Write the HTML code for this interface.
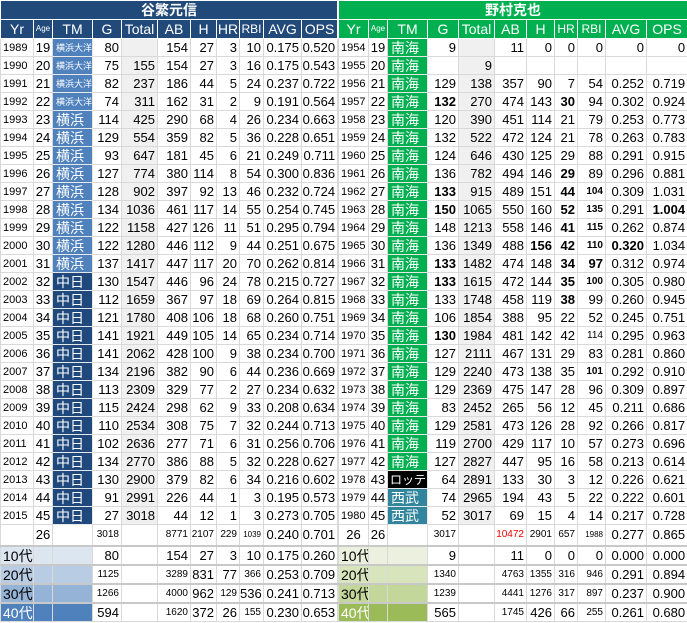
<!DOCTYPE html>
<html><head><meta charset="utf-8">
<style>
body{margin:0;width:687px;height:623px;background:#fff;overflow:hidden;font-family:"Liberation Sans","Noto Sans CJK JP",sans-serif;}
table{position:absolute;top:0;border-collapse:collapse;table-layout:fixed;font-size:13px;color:#000;}
#L{left:0;width:337px}
#R{left:338px;width:349px}
td{border:1px solid #d9d9d9;padding:0 2px 0 0;text-align:right;white-space:nowrap;overflow:hidden;height:17px;line-height:16px;}
tr.h td{color:#fff;text-align:center;padding:0;font-size:14px;border-color:#fff;height:18px}
#L tr.h td{background:#21497a}
#R tr.h td{background:#00b050}
tr.n td{font-size:14px;font-weight:bold;border-color:#fff}
td.y{font-size:11px;text-align:left;padding-left:2px}
td.a{text-align:center;padding:0}
td.t{background:#f0f0f0}
td.tm{text-align:left;padding-left:3px;color:#fff;font-size:14px;border-color:#e8e8e8}
.yo{background:#4f81bd;font-size:9px !important}
.yk{background:#4f81bd}
.cd{background:#1f497d}
.nk{background:#00b050}
.lo{background:#000;font-size:12px !important;padding-left:2px !important}
.sb{background:#31859c}
.b{font-weight:bold}
.s{font-size:10px}
.r{color:#e00;font-size:10px}
tr.tot td{height:20px}
tr.sm td{border-top:2px solid #c8c8c8;height:17px}
tr.sm td.y{font-size:14px}
.l1{background:#dce6f1}.l2{background:#b8cce4}.l3{background:#95b3d7}.l4{background:#4f81bd;color:#fff}
.r1{background:#ebf1de}.r2{background:#d8e4bc}.r3{background:#c4d79b}.r4{background:#9bbb59;color:#fff}
</style></head><body>
<table id="L">
<colgroup><col style="width:33px"><col style="width:19px"><col style="width:40px"><col style="width:29px"><col style="width:36px"><col style="width:33px"><col style="width:26px"><col style="width:23px"><col style="width:24px"><col style="width:38px"><col style="width:36px"></colgroup>
<tr class="h n"><td colspan="11">谷繁元信</td></tr>
<tr class="h"><td>Yr</td><td style="font-size:8px">Age</td><td>TM</td><td>G</td><td>Total</td><td>AB</td><td>H</td><td>HR</td><td style="font-size:12px">RBI</td><td>AVG</td><td>OPS</td></tr>
<tr><td class="y">1989</td><td class="a">19</td><td class="tm yo">横浜大洋</td><td>80</td><td class="t"></td><td>154</td><td>27</td><td>3</td><td>10</td><td>0.175</td><td>0.520</td></tr>
<tr><td class="y">1990</td><td class="a">20</td><td class="tm yo">横浜大洋</td><td>75</td><td class="t">155</td><td>154</td><td>27</td><td>3</td><td>16</td><td>0.175</td><td>0.543</td></tr>
<tr><td class="y">1991</td><td class="a">21</td><td class="tm yo">横浜大洋</td><td>82</td><td class="t">237</td><td>186</td><td>44</td><td>5</td><td>24</td><td>0.237</td><td>0.722</td></tr>
<tr><td class="y">1992</td><td class="a">22</td><td class="tm yo">横浜大洋</td><td>74</td><td class="t">311</td><td>162</td><td>31</td><td>2</td><td>9</td><td>0.191</td><td>0.564</td></tr>
<tr><td class="y">1993</td><td class="a">23</td><td class="tm yk">横浜</td><td>114</td><td class="t">425</td><td>290</td><td>68</td><td>4</td><td>26</td><td>0.234</td><td>0.663</td></tr>
<tr><td class="y">1994</td><td class="a">24</td><td class="tm yk">横浜</td><td>129</td><td class="t">554</td><td>359</td><td>82</td><td>5</td><td>36</td><td>0.228</td><td>0.651</td></tr>
<tr><td class="y">1995</td><td class="a">25</td><td class="tm yk">横浜</td><td>93</td><td class="t">647</td><td>181</td><td>45</td><td>6</td><td>21</td><td>0.249</td><td>0.711</td></tr>
<tr><td class="y">1996</td><td class="a">26</td><td class="tm yk">横浜</td><td>127</td><td class="t">774</td><td>380</td><td>114</td><td>8</td><td>54</td><td>0.300</td><td>0.836</td></tr>
<tr><td class="y">1997</td><td class="a">27</td><td class="tm yk">横浜</td><td>128</td><td class="t">902</td><td>397</td><td>92</td><td>13</td><td>46</td><td>0.232</td><td>0.724</td></tr>
<tr><td class="y">1998</td><td class="a">28</td><td class="tm yk">横浜</td><td>134</td><td class="t">1036</td><td>461</td><td>117</td><td>14</td><td>55</td><td>0.254</td><td>0.745</td></tr>
<tr><td class="y">1999</td><td class="a">29</td><td class="tm yk">横浜</td><td>122</td><td class="t">1158</td><td>427</td><td>126</td><td>11</td><td>51</td><td>0.295</td><td>0.794</td></tr>
<tr><td class="y">2000</td><td class="a">30</td><td class="tm yk">横浜</td><td>122</td><td class="t">1280</td><td>446</td><td>112</td><td>9</td><td>44</td><td>0.251</td><td>0.675</td></tr>
<tr><td class="y">2001</td><td class="a">31</td><td class="tm yk">横浜</td><td>137</td><td class="t">1417</td><td>447</td><td>117</td><td>20</td><td>70</td><td>0.262</td><td>0.814</td></tr>
<tr><td class="y">2002</td><td class="a">32</td><td class="tm cd">中日</td><td>130</td><td class="t">1547</td><td>446</td><td>96</td><td>24</td><td>78</td><td>0.215</td><td>0.727</td></tr>
<tr><td class="y">2003</td><td class="a">33</td><td class="tm cd">中日</td><td>112</td><td class="t">1659</td><td>367</td><td>97</td><td>18</td><td>69</td><td>0.264</td><td>0.815</td></tr>
<tr><td class="y">2004</td><td class="a">34</td><td class="tm cd">中日</td><td>121</td><td class="t">1780</td><td>408</td><td>106</td><td>18</td><td>68</td><td>0.260</td><td>0.751</td></tr>
<tr><td class="y">2005</td><td class="a">35</td><td class="tm cd">中日</td><td>141</td><td class="t">1921</td><td>449</td><td>105</td><td>14</td><td>65</td><td>0.234</td><td>0.714</td></tr>
<tr><td class="y">2006</td><td class="a">36</td><td class="tm cd">中日</td><td>141</td><td class="t">2062</td><td>428</td><td>100</td><td>9</td><td>38</td><td>0.234</td><td>0.700</td></tr>
<tr><td class="y">2007</td><td class="a">37</td><td class="tm cd">中日</td><td>134</td><td class="t">2196</td><td>382</td><td>90</td><td>6</td><td>44</td><td>0.236</td><td>0.669</td></tr>
<tr><td class="y">2008</td><td class="a">38</td><td class="tm cd">中日</td><td>113</td><td class="t">2309</td><td>329</td><td>77</td><td>2</td><td>27</td><td>0.234</td><td>0.632</td></tr>
<tr><td class="y">2009</td><td class="a">39</td><td class="tm cd">中日</td><td>115</td><td class="t">2424</td><td>298</td><td>62</td><td>9</td><td>33</td><td>0.208</td><td>0.634</td></tr>
<tr><td class="y">2010</td><td class="a">40</td><td class="tm cd">中日</td><td>110</td><td class="t">2534</td><td>308</td><td>75</td><td>7</td><td>32</td><td>0.244</td><td>0.713</td></tr>
<tr><td class="y">2011</td><td class="a">41</td><td class="tm cd">中日</td><td>102</td><td class="t">2636</td><td>277</td><td>71</td><td>6</td><td>31</td><td>0.256</td><td>0.706</td></tr>
<tr><td class="y">2012</td><td class="a">42</td><td class="tm cd">中日</td><td>134</td><td class="t">2770</td><td>386</td><td>88</td><td>5</td><td>32</td><td>0.228</td><td>0.627</td></tr>
<tr><td class="y">2013</td><td class="a">43</td><td class="tm cd">中日</td><td>130</td><td class="t">2900</td><td>379</td><td>82</td><td>6</td><td>34</td><td>0.216</td><td>0.602</td></tr>
<tr><td class="y">2014</td><td class="a">44</td><td class="tm cd">中日</td><td>91</td><td class="t">2991</td><td>226</td><td>44</td><td>1</td><td>3</td><td>0.195</td><td>0.573</td></tr>
<tr><td class="y">2015</td><td class="a">45</td><td class="tm cd">中日</td><td>27</td><td class="t">3018</td><td>44</td><td>12</td><td>1</td><td>3</td><td>0.273</td><td>0.705</td></tr>
<tr class="tot"><td class="y"></td><td class="a">26</td><td></td><td class="s">3018</td><td></td><td class="s">8771</td><td class="s">2107</td><td class="s">229</td><td style="font-size:8px">1039</td><td>0.240</td><td>0.701</td></tr>
<tr class="sm"><td class="y l1">10代</td><td class="l1"></td><td class="l1"></td><td>80</td><td></td><td>154</td><td>27</td><td>3</td><td>10</td><td>0.175</td><td>0.260</td></tr>
<tr class="sm"><td class="y l2">20代</td><td class="l2"></td><td class="l2"></td><td class="s">1125</td><td></td><td class="s">3289</td><td>831</td><td>77</td><td class="s">366</td><td>0.253</td><td>0.709</td></tr>
<tr class="sm"><td class="y l3">30代</td><td class="l3"></td><td class="l3"></td><td class="s">1266</td><td></td><td class="s">4000</td><td>962</td><td class="s">129</td><td>536</td><td>0.241</td><td>0.713</td></tr>
<tr class="sm"><td class="y l4">40代</td><td class="l4"></td><td class="l4"></td><td>594</td><td></td><td class="s">1620</td><td>372</td><td>26</td><td class="s">155</td><td>0.230</td><td>0.653</td></tr>
</table>
<table id="R">
<colgroup><col style="width:30px"><col style="width:19px"><col style="width:40px"><col style="width:31px"><col style="width:36px"><col style="width:32px"><col style="width:28px"><col style="width:23px"><col style="width:28px"><col style="width:41px"><col style="width:41px"></colgroup>
<tr class="h n"><td colspan="11">野村克也</td></tr>
<tr class="h"><td>Yr</td><td style="font-size:8px">Age</td><td>TM</td><td>G</td><td>Total</td><td>AB</td><td>H</td><td style="font-size:12px">HR</td><td style="font-size:12px">RBI</td><td>AVG</td><td>OPS</td></tr>
<tr><td class="y">1954</td><td class="a">19</td><td class="tm nk">南海</td><td>9</td><td class="t"></td><td>11</td><td>0</td><td>0</td><td>0</td><td>0</td><td>0</td></tr>
<tr><td class="y">1955</td><td class="a">20</td><td class="tm nk">南海</td><td></td><td class="t">9</td><td></td><td></td><td></td><td></td><td></td><td></td></tr>
<tr><td class="y">1956</td><td class="a">21</td><td class="tm nk">南海</td><td>129</td><td class="t">138</td><td>357</td><td>90</td><td>7</td><td>54</td><td>0.252</td><td>0.719</td></tr>
<tr><td class="y">1957</td><td class="a">22</td><td class="tm nk">南海</td><td class="b">132</td><td class="t">270</td><td>474</td><td>143</td><td class="b">30</td><td>94</td><td>0.302</td><td>0.924</td></tr>
<tr><td class="y">1958</td><td class="a">23</td><td class="tm nk">南海</td><td>120</td><td class="t">390</td><td>451</td><td>114</td><td>21</td><td>79</td><td>0.253</td><td>0.773</td></tr>
<tr><td class="y">1959</td><td class="a">24</td><td class="tm nk">南海</td><td>132</td><td class="t">522</td><td>472</td><td>124</td><td>21</td><td>78</td><td>0.263</td><td>0.783</td></tr>
<tr><td class="y">1960</td><td class="a">25</td><td class="tm nk">南海</td><td>124</td><td class="t">646</td><td>430</td><td>125</td><td>29</td><td>88</td><td>0.291</td><td>0.915</td></tr>
<tr><td class="y">1961</td><td class="a">26</td><td class="tm nk">南海</td><td>136</td><td class="t">782</td><td>494</td><td>146</td><td class="b">29</td><td>89</td><td>0.296</td><td>0.881</td></tr>
<tr><td class="y">1962</td><td class="a">27</td><td class="tm nk">南海</td><td class="b">133</td><td class="t">915</td><td>489</td><td>151</td><td class="b">44</td><td class="b s">104</td><td>0.309</td><td>1.031</td></tr>
<tr><td class="y">1963</td><td class="a">28</td><td class="tm nk">南海</td><td class="b">150</td><td class="t">1065</td><td>550</td><td>160</td><td class="b">52</td><td class="b s">135</td><td>0.291</td><td class="b">1.004</td></tr>
<tr><td class="y">1964</td><td class="a">29</td><td class="tm nk">南海</td><td>148</td><td class="t">1213</td><td>558</td><td>146</td><td class="b">41</td><td class="b s">115</td><td>0.262</td><td>0.874</td></tr>
<tr><td class="y">1965</td><td class="a">30</td><td class="tm nk">南海</td><td>136</td><td class="t">1349</td><td>488</td><td class="b">156</td><td class="b">42</td><td class="b s">110</td><td class="b">0.320</td><td>1.034</td></tr>
<tr><td class="y">1966</td><td class="a">31</td><td class="tm nk">南海</td><td class="b">133</td><td class="t">1482</td><td>474</td><td>148</td><td class="b">34</td><td class="b">97</td><td>0.312</td><td>0.974</td></tr>
<tr><td class="y">1967</td><td class="a">32</td><td class="tm nk">南海</td><td class="b">133</td><td class="t">1615</td><td>472</td><td>144</td><td class="b">35</td><td class="b s">100</td><td>0.305</td><td>0.980</td></tr>
<tr><td class="y">1968</td><td class="a">33</td><td class="tm nk">南海</td><td>133</td><td class="t">1748</td><td>458</td><td>119</td><td class="b">38</td><td>99</td><td>0.260</td><td>0.945</td></tr>
<tr><td class="y">1969</td><td class="a">34</td><td class="tm nk">南海</td><td>106</td><td class="t">1854</td><td>388</td><td>95</td><td>22</td><td>52</td><td>0.245</td><td>0.751</td></tr>
<tr><td class="y">1970</td><td class="a">35</td><td class="tm nk">南海</td><td class="b">130</td><td class="t">1984</td><td>481</td><td>142</td><td>42</td><td class="s">114</td><td>0.295</td><td>0.963</td></tr>
<tr><td class="y">1971</td><td class="a">36</td><td class="tm nk">南海</td><td>127</td><td class="t">2111</td><td>467</td><td>131</td><td>29</td><td>83</td><td>0.281</td><td>0.860</td></tr>
<tr><td class="y">1972</td><td class="a">37</td><td class="tm nk">南海</td><td>129</td><td class="t">2240</td><td>473</td><td>138</td><td>35</td><td class="b s">101</td><td>0.292</td><td>0.910</td></tr>
<tr><td class="y">1973</td><td class="a">38</td><td class="tm nk">南海</td><td>129</td><td class="t">2369</td><td>475</td><td>147</td><td>28</td><td>96</td><td>0.309</td><td>0.897</td></tr>
<tr><td class="y">1974</td><td class="a">39</td><td class="tm nk">南海</td><td>83</td><td class="t">2452</td><td>265</td><td>56</td><td>12</td><td>45</td><td>0.211</td><td>0.686</td></tr>
<tr><td class="y">1975</td><td class="a">40</td><td class="tm nk">南海</td><td>129</td><td class="t">2581</td><td>473</td><td>126</td><td>28</td><td>92</td><td>0.266</td><td>0.817</td></tr>
<tr><td class="y">1976</td><td class="a">41</td><td class="tm nk">南海</td><td>119</td><td class="t">2700</td><td>429</td><td>117</td><td>10</td><td>57</td><td>0.273</td><td>0.696</td></tr>
<tr><td class="y">1977</td><td class="a">42</td><td class="tm nk">南海</td><td>127</td><td class="t">2827</td><td>447</td><td>95</td><td>16</td><td>58</td><td>0.213</td><td>0.614</td></tr>
<tr><td class="y">1978</td><td class="a">43</td><td class="tm lo">ロッテ</td><td>64</td><td class="t">2891</td><td>133</td><td>30</td><td>3</td><td>12</td><td>0.226</td><td>0.621</td></tr>
<tr><td class="y">1979</td><td class="a">44</td><td class="tm sb">西武</td><td>74</td><td class="t">2965</td><td>194</td><td>43</td><td>5</td><td>22</td><td>0.222</td><td>0.601</td></tr>
<tr><td class="y">1980</td><td class="a">45</td><td class="tm sb">西武</td><td>52</td><td class="t">3017</td><td>69</td><td>15</td><td>4</td><td>14</td><td>0.217</td><td>0.728</td></tr>
<tr class="tot"><td class="a">26</td><td class="a">26</td><td></td><td class="s">3017</td><td></td><td class="r">10472</td><td class="s">2901</td><td class="s">657</td><td style="font-size:8px">1988</td><td>0.277</td><td>0.865</td></tr>
<tr class="sm"><td class="y r1">10代</td><td class="r1"></td><td class="r1"></td><td>9</td><td></td><td>11</td><td>0</td><td>0</td><td>0</td><td>0.000</td><td>0.000</td></tr>
<tr class="sm"><td class="y r2">20代</td><td class="r2"></td><td class="r2"></td><td class="s">1340</td><td></td><td class="s">4763</td><td class="s">1355</td><td class="s">316</td><td class="s">946</td><td>0.291</td><td>0.894</td></tr>
<tr class="sm"><td class="y r3">30代</td><td class="r3"></td><td class="r3"></td><td class="s">1239</td><td></td><td class="s">4441</td><td class="s">1276</td><td class="s">317</td><td class="s">897</td><td>0.237</td><td>0.900</td></tr>
<tr class="sm"><td class="y r4">40代</td><td class="r4"></td><td class="r4"></td><td>565</td><td></td><td class="s">1745</td><td>426</td><td>66</td><td class="s">255</td><td>0.261</td><td>0.680</td></tr>
</table>
</body></html>
